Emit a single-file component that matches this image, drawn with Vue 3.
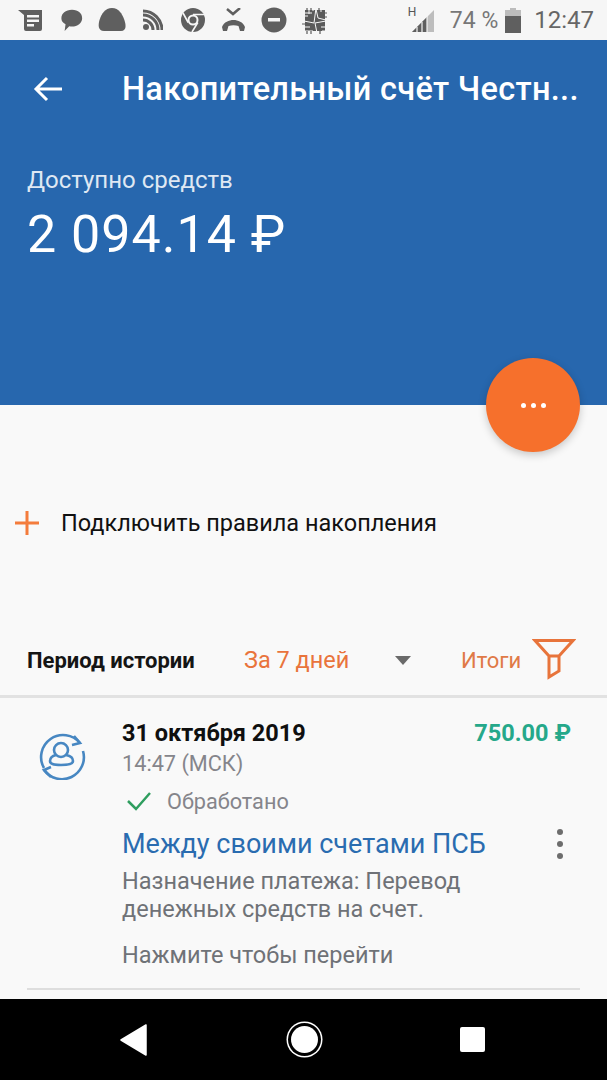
<script setup>
const notes = 'Назначение платежа: Перевод денежных средств на счет.'
</script>

<template>
  <div class="screen">
    <div class="status">
      <div class="status-left">
        <span class="slot"><svg width="26" height="24" viewBox="0 0 26 24"><path d="M0 2h24v19a2 2 0 0 1-2 2H8a2 2 0 0 1-2-2V7z" fill="#5f5f5f"/><path d="M9 7h12v2.500H9zM9 11.500h12V14H9zM9 16h7v2.500H9z" fill="#f6f6f6"/></svg></span>
        <span class="slot"><svg width="24" height="26" viewBox="0 0 26 26"><path d="M13 2c7 0 11 4 11 9s-5 9-11 9c-1 0-2 0-3-.3L5 25l1-7.500C3 16 1.500 14 1.500 11 1.500 6 6 2 13 2z" fill="#5f5f5f"/></svg></span>
        <span class="slot"><svg width="29" height="26" viewBox="0 0 29 26"><path d="M14 1c7 0 10 6 12 11 2 5 3 12-3 12H6C0 24 0 18 1.500 13 3.500 7 7 1 14 1z" fill="#5f5f5f"/></svg></span>
        <span class="slot"><svg width="20" height="22" viewBox="0 0 20 22"><circle cx="3" cy="18" r="3" fill="#5f5f5f"/><path d="M0 10a10 10 0 0 1 10 10M0 5a15 15 0 0 1 15 15M0 1a19 19 0 0 1 19 19" transform="translate(0 1)" fill="none" stroke="#5f5f5f" stroke-width="3"/></svg></span>
        <span class="slot"><svg width="26" height="26" viewBox="0 0 26 26"><circle cx="13" cy="13" r="12" fill="#5f5f5f"/><circle cx="13" cy="13" r="5.500" fill="#f6f6f6"/><circle cx="13" cy="13" r="3.500" fill="#5f5f5f"/><path d="M13 7.500h11M8.200 15.500 3 6M17.800 15.500 12 25" stroke="#f6f6f6" stroke-width="1.600"/></svg></span>
        <span class="slot"><svg width="25" height="24" viewBox="0 0 25 24"><path d="M1 19c2-5 7-7 11.500-7S22 14 24 19l-1 4h-4l-1.500-5c-3-1-7-1-10 0L6 23H2z" fill="#5f5f5f"/><path d="M6 1l6 5 7-6" fill="none" stroke="#5f5f5f" stroke-width="2.500"/></svg></span>
        <span class="slot"><svg width="26" height="26" viewBox="0 0 26 26"><circle cx="13" cy="13" r="12.500" fill="#5f5f5f"/><rect x="7" y="11" width="12" height="3.500" fill="#f6f6f6"/></svg></span>
        <span class="slot"><svg width="27" height="27" viewBox="0 0 27 27"><path d="M4 3h20v21H4z" fill="#5a5a5a"/><path d="M1 6h10M1 9h6M1 20h8M1 24h11M15 2l2 9 8 2M16 26l-2-10 11-2M3 14l10 2 2-15M20 20h6M21 24h5M8 1v6M12 1v3M20 1v4" fill="none" stroke="#f6f6f6" stroke-width="1"/><path d="M6 1v3M10 1v2M18 1v2M23 6h3M23 10h3M1 17h3M6 24v3M10 24v3M19 24v3" stroke="#5a5a5a" stroke-width="1.200"/></svg></span>
      </div>
      <div class="status-right">
        <div class="signal">
          <span class="h-mark">H</span>
          <svg width="24" height="26" viewBox="0 0 24 26"><path d="M1 25 23 3v22z" fill="#bdbdbd"/><path d="M1 25l15-15v15z" fill="#5f5f5f"/><path d="M6 20v5M11 15v10M16 9v16" stroke="#f6f6f6" stroke-width="1.200"/></svg>
        </div>
        <span class="pct">74 %</span>
        <svg width="16" height="25" viewBox="0 0 16 25"><path d="M5 0h6v2h5v6H0V2h5z" fill="#bcbcbc"/><rect y="8" width="16" height="17" fill="#5f5f5f"/></svg>
        <span class="clock">12:47</span>
      </div>
    </div>

    <header class="hero">
      <div class="topbar">
        <svg class="back" width="30" height="26" viewBox="0 0 30 26"><path d="M29 13H4M14 2 3 13l11 11" fill="none" stroke="#fff" stroke-width="3"/></svg>
        <h1 class="title">Накопительный счёт Честн...</h1>
      </div>
      <div class="balance-label">Доступно средств</div>
      <div class="balance">2 094.14 ₽</div>
    </header>

    <button class="fab" aria-label="Ещё"><i></i><i></i><i></i></button>

    <main class="content">
      <div class="rules">
        <svg width="26" height="26" viewBox="0 0 26 26"><path d="M13 1v24M1 13h24" stroke="#f47c3c" stroke-width="3"/></svg>
        <span>Подключить правила накопления</span>
      </div>

      <div class="filter">
        <strong class="period-label">Период истории</strong>
        <span class="period">За 7 дней</span>
        <span class="caret"></span>
        <span class="totals">Итоги</span>
        <svg class="funnel" width="44" height="42" viewBox="0 0 44 42"><path d="M3 2.500h38L27 18H17zM17 18v21l10-6V18" fill="none" stroke="#e8743b" stroke-width="3"/></svg>
      </div>

      <article class="item">
        <svg class="swap" width="48" height="48" viewBox="0 0 48 48" fill="none" stroke="#4787c2" stroke-width="2.600">
          <path d="M6 36A22 22 0 0 1 42 11"/><path d="M36 4l6 7-8 2"/>
          <path d="M45 19A22 22 0 0 1 6 38"/><path d="M13 35l-7 3 7 7"/>
          <circle cx="23" cy="18" r="7"/>
          <path d="M18 23c-4 1-6 3-6 6s3 4 11 4 12-1 12-4-2-5-7-6"/>
        </svg>
        <div class="item-body">
          <div class="item-top">
            <strong class="date">31 октября 2019</strong>
            <strong class="amount">750.00 ₽</strong>
          </div>
          <div class="time">14:47 (МСК)</div>
          <div class="state">
            <svg width="26" height="20" viewBox="0 0 26 20"><path d="M2 10l8 8L24 2" fill="none" stroke="#2f9e5f" stroke-width="2.500"/></svg>
            <span>Обработано</span>
          </div>
          <div class="link-row">
            <span class="link">Между своими счетами ПСБ</span>
            <span class="kebab"><i></i><i></i><i></i></span>
          </div>
          <p class="notes">{{ notes }}</p>
          <p class="hint">Нажмите чтобы перейти</p>
        </div>
      </article>
      <div class="rule"></div>
    </main>

    <nav class="nav">
      <svg width="28" height="32" viewBox="0 0 28 32"><path d="M26 1v30L1 16z" fill="#fff" stroke="#fff" stroke-linejoin="round" stroke-width="1.500"/></svg>
      <span class="home"></span>
      <span class="square"></span>
    </nav>
  </div>
</template>

<style>
html, body { margin: 0; background: #f9f9f9; }
</style>

<style scoped>
.screen { position: relative; width: 607px; height: 1080px; overflow: hidden; display: flex; flex-direction: column; background: #f9f9f9; font-family: Roboto, "Noto Sans", sans-serif; }
.status { height: 40px; flex: none; box-sizing: border-box; padding: 0 13px 0 11px; display: flex; justify-content: space-between; align-items: center; background: #f6f6f6; color: #666; }
.status-left { display: flex; align-items: center; }
.slot { width: 40.500px; display: flex; justify-content: center; }
.status-right { display: flex; align-items: center; gap: 7px; }
.signal { position: relative; display: flex; margin-right: 8px; }
.h-mark { position: absolute; left: -3px; top: -2px; font-size: 12px; color: #555; }
.pct { font-size: 23px; color: #777; }
.clock { font-size: 24px; color: #666; margin-left: 6px; }
.hero { height: 365px; flex: none; box-sizing: border-box; padding: 0 27px; background: #2767ae; color: #fff; }
.topbar { height: 98px; display: flex; align-items: center; }
.back { margin: 0 0 0 6px; flex: none; }
.title { margin: 0 0 0 59px; font-size: 32.500px; font-weight: 500; letter-spacing: 0.3px; white-space: nowrap; }
.balance-label { margin-top: 27px; font-size: 24px; color: #dfe8f3; line-height: 30px; }
.balance { margin-top: 10px; font-size: 52px; line-height: 60px; letter-spacing: 1px; }
.fab { position: absolute; left: 486px; top: 358px; width: 94px; height: 94px; padding: 0; border: 0; border-radius: 50%; background: #f6702c; box-shadow: 0 3px 8px rgba(0,0,0,.2); display: flex; align-items: center; justify-content: center; gap: 5px; }
.fab i { width: 5px; height: 5px; border-radius: 50%; background: #fff; }
.content { flex: 1; min-height: 0; }
.rules { margin-top: 105px; height: 26px; padding-left: 14px; display: flex; align-items: center; gap: 21px; font-size: 23.500px; color: #111; }
.filter { margin-top: 97px; height: 65px; box-sizing: border-box; padding: 0 30px 8px 27px; display: flex; align-items: center; border-bottom: 3px solid #e2e2e2; font-size: 22px; }
.period-label { font-size: 22px; font-weight: 700; color: #151515; width: 217px; flex: none; }
.period { color: #e9743c; font-size: 23.500px; width: 151px; flex: none; }
.caret { width: 0; height: 0; border: 8.500px solid transparent; border-bottom: 0; border-top: 9px solid #6a6a6a; margin-right: 50px; flex: none; }
.totals { color: #e07a47; width: 71px; flex: none; }
.funnel { flex: none; margin-top: -2px; }
.item { padding: 20px 27px 0; display: flex; }
.swap { flex: none; margin: 14px 36px 0 11px; }
.item-body { flex: 1; min-width: 0; }
.item-top { display: flex; justify-content: space-between; line-height: 30px; }
.date { font-size: 23.500px; font-weight: 700; color: #0f0f0f; }
.amount { font-size: 23.500px; font-weight: 700; color: #25a88a; margin-right: 9px; }
.time { font-size: 21.700px; line-height: 28px; margin-top: 2px; color: #85858b; }
.state { display: flex; align-items: center; gap: 15px; margin-top: 10px; height: 26px; font-size: 21.700px; color: #85858b; margin-left: 4px; }
.link-row { margin-top: 13px; height: 34px; display: flex; justify-content: space-between; align-items: center; }
.link { font-size: 27px; color: #2a6cb0; }
.kebab { display: flex; flex-direction: column; gap: 6px; margin-right: 17px; }
.kebab i { width: 6px; height: 6px; border-radius: 50%; background: #6d6d6d; }
.notes { margin: 6px 20px 0 0; font-size: 23.500px; line-height: 28px; color: #6f7277; }
.hint { margin: 17px 0 0; font-size: 23.500px; line-height: 30px; color: #6f7277; }
.rule { margin: 18px 27px 0 27px; height: 2px; background: #dedede; }
.nav { height: 81px; flex: none; background: #000; display: flex; align-items: center; justify-content: space-between; padding: 0 122px 0 120px; box-sizing: border-box; }
.home { width: 27px; height: 27px; border-radius: 50%; background: #fff; box-shadow: 0 0 0 3px #000, 0 0 0 4.500px #fff; }
.square { width: 25px; height: 25px; border-radius: 2px; background: #fff; }
</style>
